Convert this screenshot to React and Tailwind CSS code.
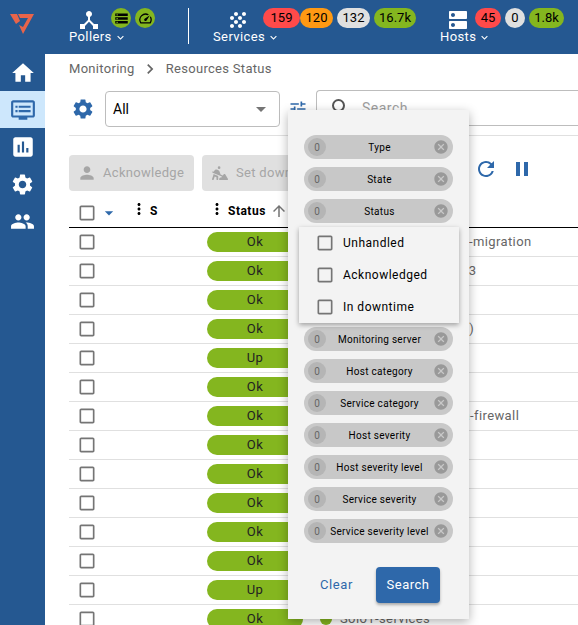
import {
  MdAssessment,
  MdArrowDropDown,
  MdArrowUpward,
  MdCancel,
  MdCheckBoxOutlineBlank,
  MdChevronRight,
  MdDeviceHub,
  MdDns,
  MdDvr,
  MdExpandMore,
  MdGrain,
  MdHome,
  MdMoreVert,
  MdPause,
  MdPeople,
  MdPerson,
  MdRefresh,
  MdSearch,
  MdSettings,
  MdSpeed,
  MdStorage,
  MdTune,
} from 'react-icons/md';
import { FaPersonDigging } from 'react-icons/fa6';

const rows = [
  { status: 'Ok', text: 'Centreon-main-poller-migration' },
  { status: 'Ok', text: 'Centreon-poller-vm-03' },
  { status: 'Ok', text: '' },
  { status: 'Ok', text: 'Centreon-database(1)' },
  { status: 'Up', text: '' },
  { status: 'Ok', text: '' },
  { status: 'Ok', text: 'Centreon-gateway-ha-firewall' },
  { status: 'Ok', text: '' },
  { status: 'Ok', text: '' },
  { status: 'Ok', text: '' },
  { status: 'Ok', text: '' },
  { status: 'Ok', text: '' },
  { status: 'Up', text: '' },
  { status: 'Ok', text: 'Solo1-services' },
];

const filters = ['Type', 'State', 'Status'];
const moreFilters = [
  'Monitoring server',
  'Host category',
  'Service category',
  'Host severity',
  'Host severity level',
  'Service severity',
  'Service severity level',
];

function Badge({ children, className }) {
  return (
    <span className={`flex h-5 items-center justify-center rounded-full text-[13px] text-black ${className}`}>
      {children}
    </span>
  );
}

function NavLabel({ children }) {
  return (
    <div className="-mt-[3px] flex h-4 items-center whitespace-nowrap text-[13px] tracking-[0.4px] text-white">
      {children}
      <MdExpandMore size={13} className="ml-[2px]" />
    </div>
  );
}

function TopBar() {
  return (
    <header className="flex h-[54px] shrink-0 bg-[#255891]">
      <div className="flex w-[45px] shrink-0 justify-center pt-[13px]">
        <svg width="25" height="22" viewBox="0 0 25 22">
          <path d="M0 1 L7 1 L10 8 L6 11 Z" fill="#e8644a" />
          <path d="M8 1 L24 1 L13 21 L9 12 L13 14 L18 5 L10 5 Z" fill="#e8644a" />
        </svg>
      </div>

      {/* Pollers */}
      <div className="relative ml-[24px] flex w-[54px] flex-col items-start pt-2">
        <MdDeviceHub size={24} className="ml-2 text-white" />
        <NavLabel>Pollers</NavLabel>
        <div className="absolute left-[42px] top-[8px] flex gap-1">
          <Badge className="w-5 bg-[#84b61f]"><MdStorage size={15} /></Badge>
          <Badge className="w-5 bg-[#84b61f]"><MdSpeed size={15} /></Badge>
        </div>
      </div>

      <div className="ml-[65px] mt-[8px] h-[36px] w-[1px] bg-white" />

      {/* Services */}
      <div className="relative ml-[24px] flex w-[60px] flex-col items-start pt-2">
        <MdGrain size={24} className="ml-[13px] text-white" />
        <NavLabel>Services</NavLabel>
        <div className="absolute left-[50px] top-[8px] flex gap-[4px]">
          <Badge className="-mr-[4px] w-[37px] bg-[#ff4a4a]">159</Badge>
          <Badge className="w-[33px] bg-[#ff9913]">120</Badge>
          <Badge className="w-[33px] bg-[#e0e0e0]">132</Badge>
          <Badge className="w-[42px] bg-[#84b61f]">16.7k</Badge>
        </div>
      </div>

      {/* Hosts */}
      <div className="relative ml-[167px] flex w-[46px] flex-col items-start pt-2">
        <MdDns size={24} className="ml-[6px] text-white" />
        <NavLabel>Hosts</NavLabel>
        <div className="absolute left-[35px] top-[8px] flex gap-[4px]">
          <Badge className="w-[26px] bg-[#ff4a4a]">45</Badge>
          <Badge className="w-5 bg-[#e0e0e0]">0</Badge>
          <Badge className="w-[35px] bg-[#84b61f]">1.8k</Badge>
        </div>
      </div>
    </header>
  );
}

function SideBar() {
  return (
    <aside className="flex w-[45px] shrink-0 flex-col bg-[#255891] pt-[1px] text-white">
      <div className="flex h-9 items-center justify-center"><MdHome size={26} /></div>
      <div className="flex h-[37px] items-center justify-center bg-[#cde7fc] text-[#2e68aa]"><MdDvr size={26} /></div>
      <div className="flex h-[38px] items-center justify-center"><MdAssessment size={26} /></div>
      <div className="flex h-[37px] items-center justify-center"><MdSettings size={25} /></div>
      <div className="flex h-9 items-center justify-center"><MdPeople size={25} /></div>
    </aside>
  );
}

function Toolbar() {
  return (
    <>
      <div className="flex h-[29px] items-center pt-[1px] text-[13px] tracking-[0.3px] text-[#666]">
        Monitoring
        <MdChevronRight size={20} className="mx-[5px]" />
        <span className="ml-[1px]">Resources Status</span>
      </div>
      <div className="mt-[7px] flex h-[46px] border-b border-[#e0e0e0]">
        <div className="flex h-[37px] w-[36px] items-center">
          <MdSettings size={24} className="ml-[2px] text-[#2e68aa]" />
        </div>
        <div className="mt-[1px] flex h-9 w-[175px] items-center justify-between rounded border border-[#bdbdbd] pl-[7px] pr-[6px] text-[14px] text-black">
          All
          <MdArrowDropDown size={24} className="text-[#757575]" />
        </div>
        <div className="flex h-[37px] w-[36px] items-center justify-center">
          <MdTune size={20} className="text-[#2e68aa]" />
        </div>
        <div className="flex h-9 flex-1 items-center rounded-l border border-r-0 border-[#bdbdbd] pl-[12px] text-[14px] tracking-[0.5px] text-[#9e9e9e]">
          <MdSearch size={24} className="mr-[9px] text-[#555]" />
          Search
        </div>
      </div>
      <div className="mt-[19px] flex h-9 items-center">
        <div className="flex h-9 w-[125px] items-center rounded bg-[#e0e0e0] pl-[8px] text-[13px] tracking-[0.3px] text-[#a6a6a6]">
          <MdPerson size={20} className="mr-[6px] text-[#a6a6a6]" />
          Acknowledge
        </div>
        <div className="ml-[8px] flex h-9 w-[125px] items-center whitespace-nowrap rounded bg-[#e0e0e0] pl-[10px] text-[13px] tracking-[0.3px] text-[#a6a6a6]">
          <FaPersonDigging size={16} className="mr-[8px] text-[#a6a6a6]" />
          Set downtime
        </div>
        <MdRefresh size={24} className="-mt-2 ml-[147px] text-[#2e68aa]" />
        <MdPause size={24} className="-mt-2 ml-3 text-[#2e68aa]" />
      </div>
    </>
  );
}

function ResourceTable() {
  return (
    <div className="mt-[5px]">
      <div className="flex h-8 items-center border-b border-black pt-[3px] text-[12px] font-bold tracking-[0.5px] text-black">
        <MdCheckBoxOutlineBlank size={20} className="ml-[8px] shrink-0 text-[#757575]" />
        <MdArrowDropDown size={20} className="ml-[2px] shrink-0 text-[#2e68aa]" />
        <MdMoreVert size={18} className="-mt-[8px] ml-[11px] shrink-0" />
        <span className="-mt-[4px] ml-[2px] w-[58px]">S</span>
        <MdMoreVert size={18} className="-mt-[8px] shrink-0" />
        <span className="-mt-[4px] ml-[2px]">Status</span>
        <MdArrowUpward size={18} className="-mt-[4px] ml-1 text-[#757575]" />
      </div>
      {rows.map((row, i) => (
        <div key={i} className="flex h-[29px] items-center border-b border-[#e0e0e0]">
          <MdCheckBoxOutlineBlank size={20} className="ml-[8px] shrink-0 text-[#757575]" />
          <div className="ml-[110px] flex h-5 w-[96px] shrink-0 items-center justify-center rounded-full bg-[#84b61f] text-[13px] tracking-[0.5px] text-[#222]">
            {row.status}
          </div>
          <div className="ml-[17px] flex items-center">
            {row.text && <span className="mr-[8px] h-3 w-3 rounded-full bg-[#84b61f]" />}
            <span className="whitespace-nowrap text-[13px] tracking-[0.4px] text-[#666]">{row.text}</span>
          </div>
        </div>
      ))}
    </div>
  );
}

function FilterChip({ label }) {
  return (
    <div className="flex h-6 items-center rounded-full bg-[#c8c8c8] px-[4px] text-black">
      <span className="flex h-[18px] w-[18px] shrink-0 items-center justify-center rounded-full bg-[#b5b5b5] text-[10px] text-[#666]">
        0
      </span>
      <span className="flex-1 whitespace-nowrap text-center text-[10px] tracking-[0.3px]">{label}</span>
      <MdCancel size={16} className="shrink-0 text-[#999]" />
    </div>
  );
}

function FilterPopover() {
  return (
    <div className="absolute left-[288px] top-[110px] flex h-[509px] w-[181px] flex-col bg-[#f3f3f3] px-[16px] pt-[25px] shadow-[0_3px_10px_rgba(0,0,0,0.3)]">
      <div className="flex flex-col gap-2">
        {filters.map((f) => (
          <FilterChip key={f} label={f} />
        ))}
      </div>

      {/* Status options, opened over the chip list */}
      <div className="absolute left-[11px] top-[117px] flex h-24 w-[160px] flex-col bg-[#f3f3f3] pl-[16px] text-[12px] tracking-[0.5px] text-black shadow-[0_2px_5px_rgba(0,0,0,0.35)]">
        {['Unhandled', 'Acknowledged', 'In downtime'].map((o) => (
          <div key={o} className="flex h-8 items-center">
            <MdCheckBoxOutlineBlank size={20} className="text-[#757575]" />
            <span className="ml-2">{o}</span>
          </div>
        ))}
      </div>

      <div className="mt-[104px] flex flex-col gap-2">
        {moreFilters.map((f) => (
          <FilterChip key={f} label={f} />
        ))}
      </div>

      <div className="mt-[24px] flex items-center">
        <span className="ml-[16px] text-[13px] tracking-[0.6px] text-[#2e68aa]">Clear</span>
        <div className="ml-[23px] flex h-9 w-16 items-center justify-center rounded bg-[#2e68aa] text-[13px] tracking-[0.5px] text-white shadow-[0_2px_3px_rgba(0,0,0,0.3)]">
          Search
        </div>
      </div>
    </div>
  );
}

export default function App() {
  return (
    <div className="relative flex h-[625px] w-[578px] flex-col overflow-hidden bg-white font-['Roboto',sans-serif]">
      <TopBar />
      <div className="flex min-h-0 flex-1">
        <SideBar />
        <main className="min-w-0 flex-1 pl-[24px]">
          <Toolbar />
          <ResourceTable />
        </main>
      </div>
      <FilterPopover />
    </div>
  );
}
